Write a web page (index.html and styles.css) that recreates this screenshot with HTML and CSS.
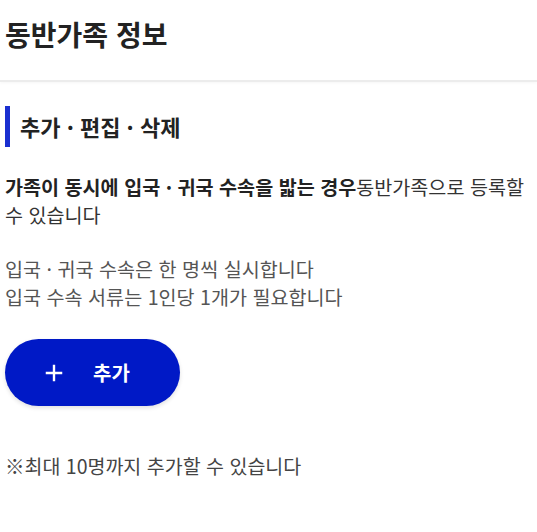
FILE: index.html
```html
<!DOCTYPE html>
<html lang="ko">
<head>
  <meta charset="UTF-8" />
  <meta name="viewport" content="width=device-width, initial-scale=1.0"/>
  <title>동반가족 정보</title>
  <link rel="stylesheet" href="styles.css">
</head>
<body>
  <header class="page-head">
    <h1>동반가족 정보</h1>
  </header>

  <main class="content">
    <h2 class="section-title">추가 · 편집 · 삭제</h2>

    <p class="lead"><strong>가족이 동시에 입국 · 귀국 수속을 밟는 경우</strong>동반가족으로 등록할 수 있습니다</p>

    <p class="note">입국 · 귀국 수속은 한 명씩 실시합니다<br>입국 수속 서류는 1인당 1개가 필요합니다</p>

    <button class="add-btn" type="button">
      <svg viewBox="0 0 24 24" xmlns="http://www.w3.org/2000/svg"><path d="M12 3v18M3 12h18"/></svg>
      <span>추가</span>
    </button>

    <p class="limit">※최대 10명까지 추가할 수 있습니다</p>
  </main>
</body>
</html>
```

FILE: styles.css
```css
body {
  margin: 0;
  font-family: "Noto Sans CJK KR", "Noto Sans", sans-serif;
  background: #fff;
  color: #222;
  font-size: 19.6px;
  line-height: 28px;
}
.page-head {
  padding: 14px 5px 26px;
  border-bottom: 2px solid #ececec;
  box-shadow: 0 1px 3px rgba(0,0,0,0.04);
}
.page-head h1 {
  margin: 0;
  font-size: 28px;
  line-height: 40px;
  font-weight: 700;
  color: #222;
}
.content {
  padding: 24px 3px 0 5px;
}
.section-title {
  margin: 0;
  font-size: 22px;
  line-height: 41px;
  font-weight: 700;
  color: #222;
  border-left: 5px solid #1a2fd0;
  padding-left: 10px;
}
.lead {
  margin: 26px 0 0;
  color: #333;
}
.lead strong {
  font-weight: 700;
  color: #222;
}
.note {
  margin: 26px 0 0;
  color: #555;
}
.add-btn {
  margin-top: 28px;
  width: 175px;
  height: 67px;
  border: none;
  border-radius: 34px;
  background: #0019c6;
  color: #fff;
  font-family: inherit;
  font-size: 20px;
  font-weight: 700;
  display: flex;
  align-items: center;
  gap: 28px;
  padding: 0 0 0 38px;
  box-shadow: 0 2px 4px rgba(0,0,0,0.12);
}
.add-btn svg {
  width: 22px;
  height: 22px;
  stroke: #fff;
  stroke-width: 2.6;
  fill: none;
}
.limit {
  margin: 46px 0 0;
  font-size: 19.5px;
  color: #444;
}
```
